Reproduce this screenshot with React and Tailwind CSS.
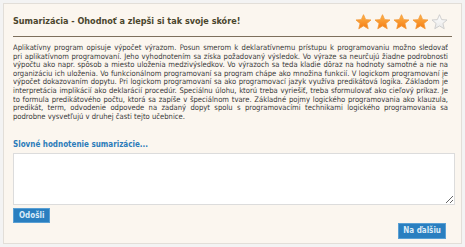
import React from 'react';

const lines = [
  'Aplikatívny program opisuje výpočet výrazom. Posun smerom k deklaratívnemu prístupu k programovaniu možno sledovať',
  'pri aplikatívnom programovaní. Jeho vyhodnotením sa získa požadovaný výsledok. Vo výraze sa neurčujú žiadne podrobnosti',
  'výpočtu ako napr. spôsob a miesto uloženia medzivýsledkov. Vo výrazoch sa teda kladie dôraz na hodnoty samotné a nie na',
  'organizáciu ich uloženia. Vo funkcionálnom programovaní sa program chápe ako množina funkcií. V logickom programovaní je',
  'výpočet dokazovaním dopytu. Pri logickom programovaní sa ako programovací jazyk využíva predikátová logika. Základom je',
  'interpretácia implikácií ako deklarácií procedúr. Špeciálnu úlohu, ktorú treba vyriešiť, treba sformulovať ako cieľový príkaz. Je',
  'to formula predikátového počtu, ktorá sa zapíše v špeciálnom tvare. Základné pojmy logického programovania ako klauzula,',
  'predikát, term, odvodenie odpovede na zadaný dopyt spolu s programovacími technikami logického programovania sa',
];

const Star = ({ filled }) => (
  <svg width="17" height="16" viewBox="0 0 24 23">
    <defs>
      <linearGradient id={filled ? 'sf' : 'se'} x1="0" y1="0" x2="0" y2="1">
        <stop offset="0" stopColor={filled ? '#ffb54a' : '#ffffff'} />
        <stop offset="1" stopColor={filled ? '#f47a12' : '#e8e8e8'} />
      </linearGradient>
    </defs>
    <path
      d="M12 1 L15.1 8.1 L22.8 8.6 L16.9 13.6 L18.8 21.2 L12 17.1 L5.2 21.2 L7.1 13.6 L1.2 8.6 L8.9 8.1 Z"
      fill={`url(#${filled ? 'sf' : 'se'})`}
      stroke={filled ? '#f39a3a' : '#c8c8c8'}
      strokeWidth="1.2"
      strokeLinejoin="round"
    />
  </svg>
);

export default function App() {
  return (
    <div
      className="w-[465px] h-[247px] bg-[#f3f3f3] pt-[3px] px-[3px]"
      style={{ fontFamily: "'DejaVu Sans Condensed', 'Liberation Sans', sans-serif" }}
    >
      <div className="h-[241px] bg-[#fbf6ef] border border-[#e2ded8] px-[9px] flex flex-col">
        {/* Header */}
        <div className="flex items-center justify-between h-[32px] mt-[1px] border-b border-[#7d6f5c] pr-[4px]">
          <h2 className="text-[9px] font-bold text-[#4a452c] pt-[2px]">
            Sumarizácia - Ohodnoť a zlepši si tak svoje skóre!
          </h2>
          <div className="flex gap-[2px] pt-[2px]">
            <Star filled />
            <Star filled />
            <Star filled />
            <Star filled />
            <Star />
          </div>
        </div>

        {/* Text */}
        <div className="mt-[7px] pr-[4px] text-[7.6px] leading-[8.6px] text-[#3a3a3a]">
          {lines.map((l, i) => (
            <div key={i} className="text-justify [text-align-last:justify] whitespace-nowrap overflow-hidden">
              {l}
            </div>
          ))}
          <div>podrobne vysvetľujú v druhej časti tejto učebnice.</div>
        </div>

        <h3 className="mt-[18px] text-[8px] font-bold text-[#2b7cba]">
          Slovné hodnotenie sumarizácie...
        </h3>

        <textarea className="mt-[2px] h-[52px] w-[442px] bg-white border border-[#dcdcdc] resize-y outline-none" />

        <div className="mt-[3px] flex">
          <button className="bg-[#2a7fc0] text-[#dcebf7] text-[8px] font-bold px-[5px] h-[15px] border border-[#5aa0d4]">
            Odošli
          </button>
        </div>

        <div className="flex justify-end pr-[6px]">
          <button className="bg-[#2a7fc0] text-[#dcebf7] text-[8px] font-bold px-[4px] h-[16px] border border-[#5aa0d4]">
            Na ďalšiu
          </button>
        </div>
      </div>
    </div>
  );
}
